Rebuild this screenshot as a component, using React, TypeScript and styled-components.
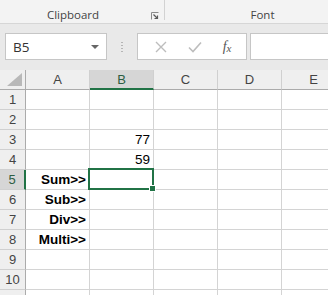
import React from 'react'
import styled, { createGlobalStyle } from 'styled-components'

const GlobalStyle = createGlobalStyle`
  html, body {
    margin: 0;
    padding: 0;
    overflow: hidden;
    background: #e9e9e9;
  }
`

const columns = ['A', 'B', 'C', 'D', 'E']

const cells: Record<string, { text: string; bold?: boolean; right?: boolean }> = {
  B3: { text: '77', right: true },
  B4: { text: '59', right: true },
  A5: { text: 'Sum>>', bold: true, right: true },
  A6: { text: 'Sub>>', bold: true, right: true },
  A7: { text: 'Div>>', bold: true, right: true },
  A8: { text: 'Multi>>', bold: true, right: true },
}

// row 11 only peeks in at the bottom edge, its number is below the fold
const rows = Array.from({ length: 11 }, (_, i) => i + 1)

const App: React.FC = () => {
  return (
    <Page>
      <GlobalStyle />
      <Ribbon>
        <Group $width={165}>
          <GroupLabel>Clipboard</GroupLabel>
          <Launcher>
            <svg width="8" height="8" viewBox="0 0 8 8">
              <path d="M0.5 7.5 V0.5 H7.5" fill="none" stroke="#8a8a8a" strokeWidth="1" />
              <path d="M2.5 2.5 L6.5 6.5 M3.5 6.5 H6.5 V3.5" fill="none" stroke="#5a5a5a" strokeWidth="1.2" />
            </svg>
          </Launcher>
        </Group>
        <Group $width={196}>
          <GroupLabel>Font</GroupLabel>
        </Group>
      </Ribbon>

      <FormulaBar>
        <NameBox>
          <span>B5</span>
          <Caret />
        </NameBox>
        <Grip>
          <Dot />
          <Dot />
          <Dot />
          <Dot />
        </Grip>
        <ActionBox>
          <svg width="12" height="12" viewBox="0 0 12 12">
            <path d="M1 1 L11 11 M11 1 L1 11" stroke="#bdbdbd" strokeWidth="1.4" />
          </svg>
          <svg width="14" height="12" viewBox="0 0 14 12">
            <path d="M1 6.5 L5 10.5 L13 1.5" fill="none" stroke="#bdbdbd" strokeWidth="1.6" />
          </svg>
          <Fx>
            f<sub>x</sub>
          </Fx>
        </ActionBox>
        <FormulaInput />
      </FormulaBar>

      <SheetWrap>
        <Sheet>
          <Corner>
            <svg width="15" height="13" viewBox="0 0 15 13">
              <path d="M0 13 L15 13 L15 0 Z" fill="#b8b8b8" />
            </svg>
          </Corner>
          {columns.map((c) => (
            <ColHead key={c} $active={c === 'B'}>
              {c}
            </ColHead>
          ))}
          {rows.map((r) => (
            <React.Fragment key={r}>
              <RowHead $active={r === 5}>{r <= 10 ? r : ''}</RowHead>
              {columns.map((c) => {
                const cell = cells[`${c}${r}`]
                return (
                  <Cell key={c} $bold={cell?.bold} $right={cell?.right}>
                    {cell?.text}
                  </Cell>
                )
              })}
            </React.Fragment>
          ))}
        </Sheet>
        <Selection>
          <Handle />
        </Selection>
      </SheetWrap>
    </Page>
  )
}

export default App

const Page = styled.div`
  width: 328px;
  height: 295px;
  overflow: hidden;
  background: #e9e9e9;
  display: flex;
  flex-direction: column;
  font-family: 'Liberation Sans', Arial, sans-serif;
`

const Ribbon = styled.div`
  height: 23px;
  flex: none;
  display: flex;
  background: #f3f3f3;
  border-bottom: 1px solid #d6d6d6;
`

const Group = styled.div<{ $width: number }>`
  position: relative;
  flex: none;
  width: ${(p) => p.$width}px;
  height: 20px;
  border-right: 1px solid #d2d2d2;
  display: flex;
  align-items: flex-end;
  justify-content: center;
  padding-right: 18px;
  box-sizing: border-box;
  &:last-child {
    padding-right: 0;
  }
`

const GroupLabel = styled.span`
  font-family: 'Open Sans', 'Noto Sans', sans-serif;
  font-size: 11.5px;
  color: #444;
  line-height: 14px;
  margin-bottom: -2px;
`

const Launcher = styled.span`
  position: absolute;
  right: 5px;
  bottom: 0;
  display: flex;
`

const FormulaBar = styled.div`
  flex: none;
  display: flex;
  align-items: stretch;
  height: 27px;
  margin: 9px 0 10px 5px;
`

const NameBox = styled.div`
  width: 102px;
  box-sizing: border-box;
  background: #fff;
  border: 1px solid #c6c6c6;
  display: flex;
  align-items: center;
  justify-content: space-between;
  padding: 0 7px 0 7px;
  font-family: 'Open Sans', 'Noto Sans', sans-serif;
  font-size: 13.5px;
  color: #333;
`

const Caret = styled.span`
  width: 0;
  height: 0;
  border-left: 4px solid transparent;
  border-right: 4px solid transparent;
  border-top: 4px solid #666;
`

const Grip = styled.div`
  width: 30px;
  flex: none;
  display: flex;
  flex-direction: column;
  align-items: center;
  justify-content: center;
  gap: 2px;
`

const Dot = styled.span`
  width: 2px;
  height: 1px;
  background: #b5b5b5;
`

const ActionBox = styled.div`
  width: 110px;
  flex: none;
  box-sizing: border-box;
  background: #fff;
  border: 1px solid #c6c6c6;
  display: flex;
  align-items: center;
  justify-content: space-around;
  padding: 0 4px 0 6px;
`

const Fx = styled.span`
  font-family: 'Liberation Serif', 'Times New Roman', serif;
  font-style: italic;
  font-size: 14px;
  color: #555;
  sub {
    font-size: 11px;
    vertical-align: -1px;
  }
`

const FormulaInput = styled.div`
  flex: 1;
  margin-left: 3px;
  background: #fff;
  border: 1px solid #c6c6c6;
  border-right: none;
`

const SheetWrap = styled.div`
  position: relative;
  flex: 1;
  background: #fff;
`

const Sheet = styled.div`
  display: grid;
  grid-template-columns: 26px repeat(5, 64px);
  grid-auto-rows: 20px;
`

const Corner = styled.div`
  background: #efefef;
  border-right: 1px solid #ababab;
  border-bottom: 1px solid #ababab;
  box-sizing: border-box;
  display: flex;
  align-items: flex-end;
  justify-content: flex-end;
  padding: 0 3px 3px 0;
`

const ColHead = styled.div<{ $active?: boolean }>`
  box-sizing: border-box;
  background: ${(p) => (p.$active ? '#d6d6d6' : '#efefef')};
  border-right: 1px solid #d0d0d0;
  border-bottom: ${(p) => (p.$active ? '2px solid #217346' : '1px solid #ababab')};
  color: ${(p) => (p.$active ? '#2d5e43' : '#444')};
  font-size: 13px;
  display: flex;
  align-items: center;
  justify-content: center;
  padding-top: ${(p) => (p.$active ? '1px' : '0')};
`

const RowHead = styled.div<{ $active?: boolean }>`
  box-sizing: border-box;
  background: ${(p) => (p.$active ? '#d6d6d6' : '#efefef')};
  border-right: ${(p) => (p.$active ? '2px solid #217346' : '1px solid #ababab')};
  border-bottom: 1px solid #d0d0d0;
  color: ${(p) => (p.$active ? '#2d5e43' : '#444')};
  font-size: 13px;
  display: flex;
  align-items: center;
  justify-content: center;
`

const Cell = styled.div<{ $bold?: boolean; $right?: boolean }>`
  box-sizing: border-box;
  border-right: 1px solid #d4d4d4;
  border-bottom: 1px solid #d4d4d4;
  color: #000;
  font-size: 13.5px;
  font-weight: ${(p) => (p.$bold ? 700 : 400)};
  display: flex;
  align-items: flex-end;
  justify-content: ${(p) => (p.$right ? 'flex-end' : 'flex-start')};
  padding: 0 3px 2px 3px;
  white-space: nowrap;
`

const Selection = styled.div`
  position: absolute;
  left: 88px;
  top: 98px;
  width: 66px;
  height: 22px;
  box-sizing: border-box;
  border: 2px solid #217346;
  pointer-events: none;
`

const Handle = styled.span`
  position: absolute;
  right: -4px;
  bottom: -4px;
  width: 5px;
  height: 5px;
  background: #217346;
  border: 1px solid #fff;
`
